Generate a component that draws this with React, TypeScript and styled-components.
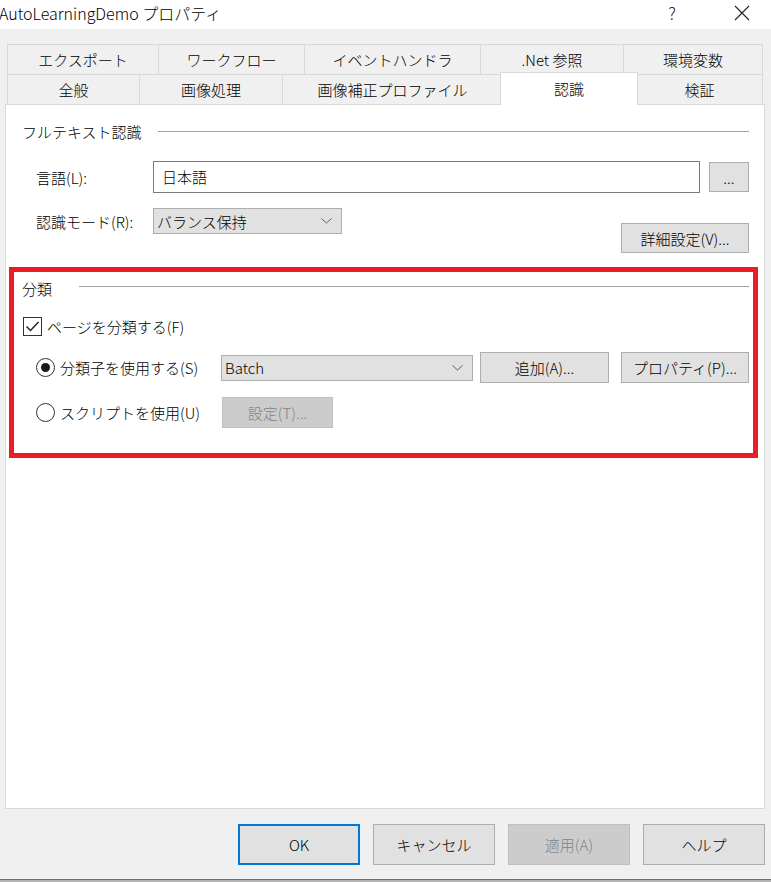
import React from 'react';
import styled, { createGlobalStyle } from 'styled-components';

const GlobalStyle = createGlobalStyle`
    html, body {
        margin: 0;
        padding: 0;
        background: #ffffff;
    }
    body {
        font-family: 'Noto Sans CJK JP', 'Noto Sans', sans-serif;
        font-weight: 300;
        color: #000;
    }
`;

const Window = styled.div`
    position: relative;
    width: 771px;
    height: 883px;
    overflow: hidden;
    font-size: 15px;
`;

const TitleBar = styled.div`
    height: 29px;
    box-sizing: border-box;
    padding-bottom: 4px;
    display: flex;
    align-items: center;
    background: #ffffff;
    font-size: 16px;
`;

const TitleText = styled.div`
    flex: 1;
    margin-left: -1px;
    white-space: nowrap;
`;

const TitleButton = styled.div<{ $w: number }>`
    width: ${(p) => p.$w}px;
    display: flex;
    justify-content: center;
    align-items: center;
    font-size: 17px;
    color: #222;
`;

const Body = styled.div`
    height: 851px;
    box-sizing: border-box;
    background: #f0f0f0;
    padding: 15px 0 0 5px;
    border-bottom: 1px solid #6e6e6e;
    display: flex;
    flex-direction: column;
`;

const BelowStrip = styled.div`
    height: 2px;
    background: #b4b4b4;
`;

const TabStrip = styled.div`
    margin-left: 2px;
    width: 756px;
`;

const TabRow = styled.div`
    display: flex;
    align-items: flex-start;
    height: 30px;
`;

const Tab = styled.div<{ $w: number; $last?: boolean; $active?: boolean }>`
    width: ${(p) => p.$w}px;
    height: ${(p) => (p.$active ? 33 : 30)}px;
    box-sizing: border-box;
    border-top: 1px solid #d9d9d9;
    border-left: 1px solid #d9d9d9;
    border-right: ${(p) => (p.$last || p.$active ? '1px solid #d9d9d9' : 'none')};
    background: ${(p) => (p.$active ? '#ffffff' : '#f0f0f0')};
    display: flex;
    justify-content: center;
    align-items: center;
    padding-bottom: ${(p) => (p.$active ? 1 : 0)}px;
    white-space: nowrap;
    ${(p) =>
        p.$active &&
        `
        position: relative;
        z-index: 1;
        margin: -2px -2px 0 -2px;
        width: ${p.$w + 4}px;
    `}
`;

const Panel = styled.div`
    width: 760px;
    height: 705px;
    box-sizing: border-box;
    background: #ffffff;
    border: 1px solid #d9d9d9;
    padding: 0 15px 0 16px;
    display: flex;
    flex-direction: column;
`;

const GroupHeader = styled.div<{ $top: number; $labelWidth: number }>`
    margin-top: ${(p) => p.$top}px;
    height: 20px;
    display: flex;
    align-items: center;
    & > span {
        width: ${(p) => p.$labelWidth}px;
        flex-shrink: 0;
        white-space: nowrap;
    }
`;

const GroupLine = styled.div<{ $dy?: number }>`
    flex: 1;
    height: 1px;
    background: #a0a0a0;
    margin-top: ${(p) => p.$dy ?? 0}px;
`;

const FieldRow = styled.div`
    margin-top: 20px;
    padding-left: 14px;
    height: 32px;
    display: flex;
    align-items: center;
`;

const ModeRow = styled.div`
    margin-top: 15px;
    padding-left: 14px;
    height: 45px;
    display: flex;
    align-items: flex-start;
`;

const ModeLeft = styled.div`
    flex: 1;
    display: flex;
    align-items: center;
    height: 26px;
`;

const Label = styled.div`
    width: 117px;
    flex-shrink: 0;
    white-space: nowrap;
`;

const TextField = styled.div`
    flex: 1;
    height: 32px;
    box-sizing: border-box;
    border: 1px solid #7a7a7a;
    background: #fff;
    padding: 0 8px;
    display: flex;
    align-items: center;
    padding-bottom: 2px;
`;

const Select = styled.div<{ $w: number }>`
    width: ${(p) => p.$w}px;
    height: 26px;
    box-sizing: border-box;
    border: 1px solid #adadad;
    background: #e1e1e1;
    padding: 0 9px 0 3px;
    display: flex;
    align-items: center;
    justify-content: space-between;
    flex-shrink: 0;
`;

const Button = styled.div<{ $w: number; $h?: number; $disabled?: boolean; $default?: boolean }>`
    width: ${(p) => p.$w}px;
    height: ${(p) => p.$h ?? 30}px;
    box-sizing: border-box;
    flex-shrink: 0;
    border: ${(p) =>
        p.$default ? '2px solid #0078d7' : p.$disabled ? '1px solid #bfbfbf' : '1px solid #adadad'};
    background: ${(p) => (p.$disabled ? '#cccccc' : '#e1e1e1')};
    color: ${(p) => (p.$disabled ? '#838383' : '#000')};
    display: flex;
    justify-content: center;
    align-items: center;
    white-space: nowrap;
`;

const Ellipsis = styled(Button)`
    margin-left: 9px;
`;

const DetailButton = styled(Button)`
    margin-top: 15px;
`;

const CheckRow = styled.div`
    margin-top: 18px;
    padding-left: 1px;
    height: 20px;
    display: flex;
    align-items: center;
    gap: 5px;
`;

const CheckBox = styled.div`
    width: 19px;
    height: 19px;
    box-sizing: border-box;
    border: 1px solid #333;
    background: #fff;
    display: flex;
    justify-content: center;
    align-items: center;
`;

const RadioRow = styled.div<{ $top: number }>`
    margin-top: ${(p) => p.$top}px;
    padding-left: 14px;
    height: 31px;
    display: flex;
    align-items: center;
`;

const RadioLabel = styled.div`
    width: 185px;
    flex-shrink: 0;
    display: flex;
    align-items: center;
    gap: 5px;
    white-space: nowrap;
`;

const RadioCircle = styled.div<{ $checked?: boolean }>`
    width: 19px;
    height: 19px;
    box-sizing: border-box;
    border: 1px solid #333;
    border-radius: 50%;
    background: #fff;
    display: flex;
    justify-content: center;
    align-items: center;
    &::after {
        content: '';
        display: ${(p) => (p.$checked ? 'block' : 'none')};
        width: 9px;
        height: 9px;
        border-radius: 50%;
        background: #1a1a1a;
    }
`;

const AddButton = styled(Button)`
    margin-left: 7px;
`;

const PropButton = styled(Button)`
    margin-left: auto;
`;

const SetButton = styled(Button)`
    margin-left: 1px;
`;

const Footer = styled.div`
    display: flex;
    justify-content: flex-end;
    gap: 13px;
    padding: 15px 6px 0 0;
`;

const Highlight = styled.div`
    position: absolute;
    left: 9px;
    top: 267px;
    width: 749px;
    height: 191px;
    box-sizing: border-box;
    border: 5px solid #ed1c24;
    pointer-events: none;
`;

const Chevron = () => (
    <svg width="11" height="6" viewBox="0 0 11 6">
        <path d="M0.5 0.5 L5.5 5 L10.5 0.5" fill="none" stroke="#606060" strokeWidth="1" />
    </svg>
);

const CloseIcon = () => (
    <svg width="16" height="16" viewBox="0 0 16 16">
        <path d="M1 1 L15 15 M15 1 L1 15" stroke="#222" strokeWidth="1.1" />
    </svg>
);

const CheckMark = () => (
    <svg width="15" height="13" viewBox="0 0 15 13">
        <path d="M1.5 6.5 L5.5 10.5 L13.5 2" fill="none" stroke="#222" strokeWidth="1.5" />
    </svg>
);

const topTabs = [
    { label: 'エクスポート', w: 151 },
    { label: 'ワークフロー', w: 146 },
    { label: 'イベントハンドラ', w: 176 },
    { label: '.Net 参照', w: 143 },
    { label: '環境変数', w: 140 },
];

const frontTabs = [
    { label: '全般', w: 132 },
    { label: '画像処理', w: 143 },
    { label: '画像補正プロファイル', w: 220 },
    { label: '認識', w: 134 },
    { label: '検証', w: 127 },
];

function App() {
    const activeTab = '認識';
    return (
        <Window>
            <GlobalStyle />
            <TitleBar>
                <TitleText>AutoLearningDemo プロパティ</TitleText>
                <TitleButton $w={82}>?</TitleButton>
                <TitleButton $w={58}>
                    <CloseIcon />
                </TitleButton>
            </TitleBar>
            <Body>
                <TabStrip>
                    <TabRow>
                        {topTabs.map((t, i) => (
                            <Tab key={t.label} $w={t.w} $last={i === topTabs.length - 1}>
                                {t.label}
                            </Tab>
                        ))}
                    </TabRow>
                    <TabRow>
                        {frontTabs.map((t, i) => (
                            <Tab key={t.label} $w={t.w} $last={i === frontTabs.length - 1} $active={t.label === activeTab}>
                                {t.label}
                            </Tab>
                        ))}
                    </TabRow>
                </TabStrip>
                <Panel>
                    <GroupHeader $top={16} $labelWidth={136}>
                        <span>フルテキスト認識</span>
                        <GroupLine />
                    </GroupHeader>
                    <FieldRow>
                        <Label>言語(L):</Label>
                        <TextField>日本語</TextField>
                        <Ellipsis $w={40}>...</Ellipsis>
                    </FieldRow>
                    <ModeRow>
                        <ModeLeft>
                            <Label>認識モード(R):</Label>
                            <Select $w={189}>
                                <span>バランス保持</span>
                                <Chevron />
                            </Select>
                        </ModeLeft>
                        <DetailButton $w={128}>詳細設定(V)...</DetailButton>
                    </ModeRow>

                    <GroupHeader $top={25} $labelWidth={57}>
                        <span>分類</span>
                        <GroupLine $dy={-4} />
                    </GroupHeader>
                    <CheckRow>
                        <CheckBox>
                            <CheckMark />
                        </CheckBox>
                        <span>ページを分類する(F)</span>
                    </CheckRow>
                    <RadioRow $top={16}>
                        <RadioLabel>
                            <RadioCircle $checked />
                            <span>分類子を使用する(S)</span>
                        </RadioLabel>
                        <Select $w={252}>
                            <span>Batch</span>
                            <Chevron />
                        </Select>
                        <AddButton $w={129} $h={31}>
                            追加(A)...
                        </AddButton>
                        <PropButton $w={128} $h={31}>
                            プロパティ(P)...
                        </PropButton>
                    </RadioRow>
                    <RadioRow $top={14}>
                        <RadioLabel>
                            <RadioCircle />
                            <span>スクリプトを使用(U)</span>
                        </RadioLabel>
                        <SetButton $w={111} $h={31} $disabled>
                            設定(T)...
                        </SetButton>
                    </RadioRow>
                </Panel>
                <Footer>
                    <Button $w={122} $h={41} $default>
                        OK
                    </Button>
                    <Button $w={122} $h={41}>
                        キャンセル
                    </Button>
                    <Button $w={122} $h={41} $disabled>
                        適用(A)
                    </Button>
                    <Button $w={122} $h={41}>
                        ヘルプ
                    </Button>
                </Footer>
            </Body>
            <BelowStrip />
            <Highlight />
        </Window>
    );
}

export default App;
